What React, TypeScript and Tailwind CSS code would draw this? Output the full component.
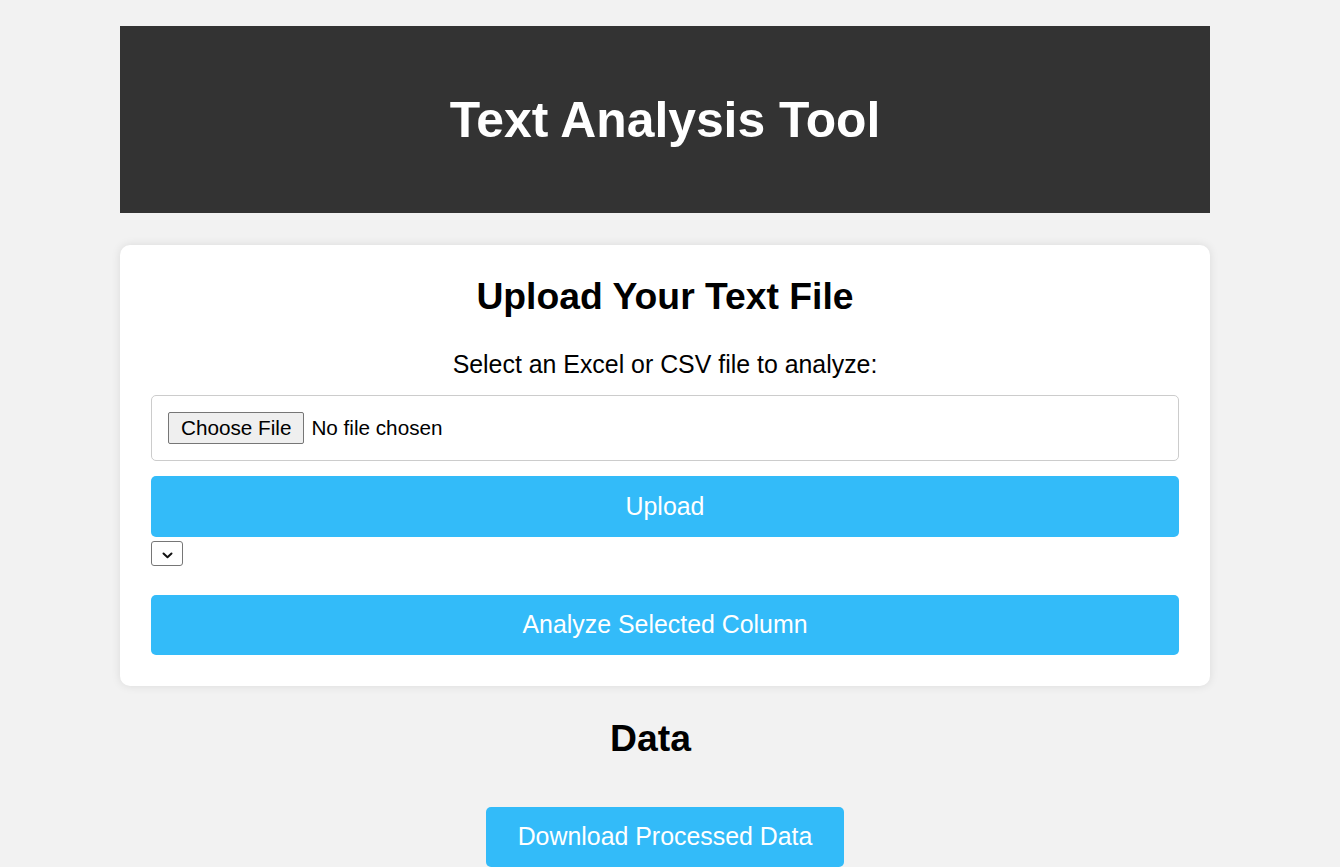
import React from "react";

export default function App() {
  const font = { fontFamily: '"Liberation Sans", Arial, sans-serif' };
  return (
    <div className="min-h-[867px] w-full bg-[#f2f2f2] pt-[26px] pb-[40px]" style={font}>
      <div className="ml-[120px] w-[1090px]">
        <header className="flex h-[187px] items-center justify-center bg-[#333333]">
          <h1 className="text-[49.8px] font-bold leading-[56px] text-white">Text Analysis Tool</h1>
        </header>

        <section className="mt-[32px] flex flex-col rounded-[10px] bg-white px-[31px] pt-[31px] pb-[31px] shadow-[0_0_10px_rgba(0,0,0,0.1)]">
          <h2 className="text-center text-[37.3px] font-bold leading-[41px] text-black">Upload Your Text File</h2>
          <p className="mt-[33px] text-center text-[24.9px] leading-[28px] text-black">
            Select an Excel or CSV file to analyze:
          </p>
          <div className="mt-[17px] flex h-[66px] items-center rounded-[5px] border border-[#cccccc] px-[16px]">
            <div className="flex h-[32px] items-center rounded-[2px] border border-[#767676] bg-[#efefef] px-[12px] text-[20.7px] leading-none text-black">
              Choose File
            </div>
            <span className="ml-[7px] text-[20.7px] leading-none text-black">No file chosen</span>
          </div>
          <div className="mt-[15px] flex h-[61px] items-center justify-center rounded-[5px] bg-[#33bbf9] text-[24.9px] text-white">
            Upload
          </div>
          <div className="mt-[4px] flex h-[25px] w-[32px] items-center justify-center rounded-[3px] border border-[#767676] bg-white pt-[4px]">
            <svg width="11" height="7" viewBox="0 0 11 7" fill="none">
              <path d="M1.5 1.5 L5.5 5.2 L9.5 1.5" stroke="#111" strokeWidth="2" strokeLinecap="round" strokeLinejoin="round" />
            </svg>
          </div>
          <div className="mt-[29px] flex h-[60px] items-center justify-center rounded-[5px] bg-[#33bbf9] text-[24.9px] text-white">
            Analyze Selected Column
          </div>
        </section>

        <h2 className="mt-[32px] pr-[29px] text-center text-[37.3px] font-bold leading-[41px] text-black">Data</h2>
        <div className="mt-[48px] flex justify-center">
          <div className="flex h-[60px] w-[358px] items-center justify-center rounded-[5px] bg-[#33bbf9] text-[24.9px] text-white">
            Download Processed Data
          </div>
        </div>
      </div>
    </div>
  );
}
